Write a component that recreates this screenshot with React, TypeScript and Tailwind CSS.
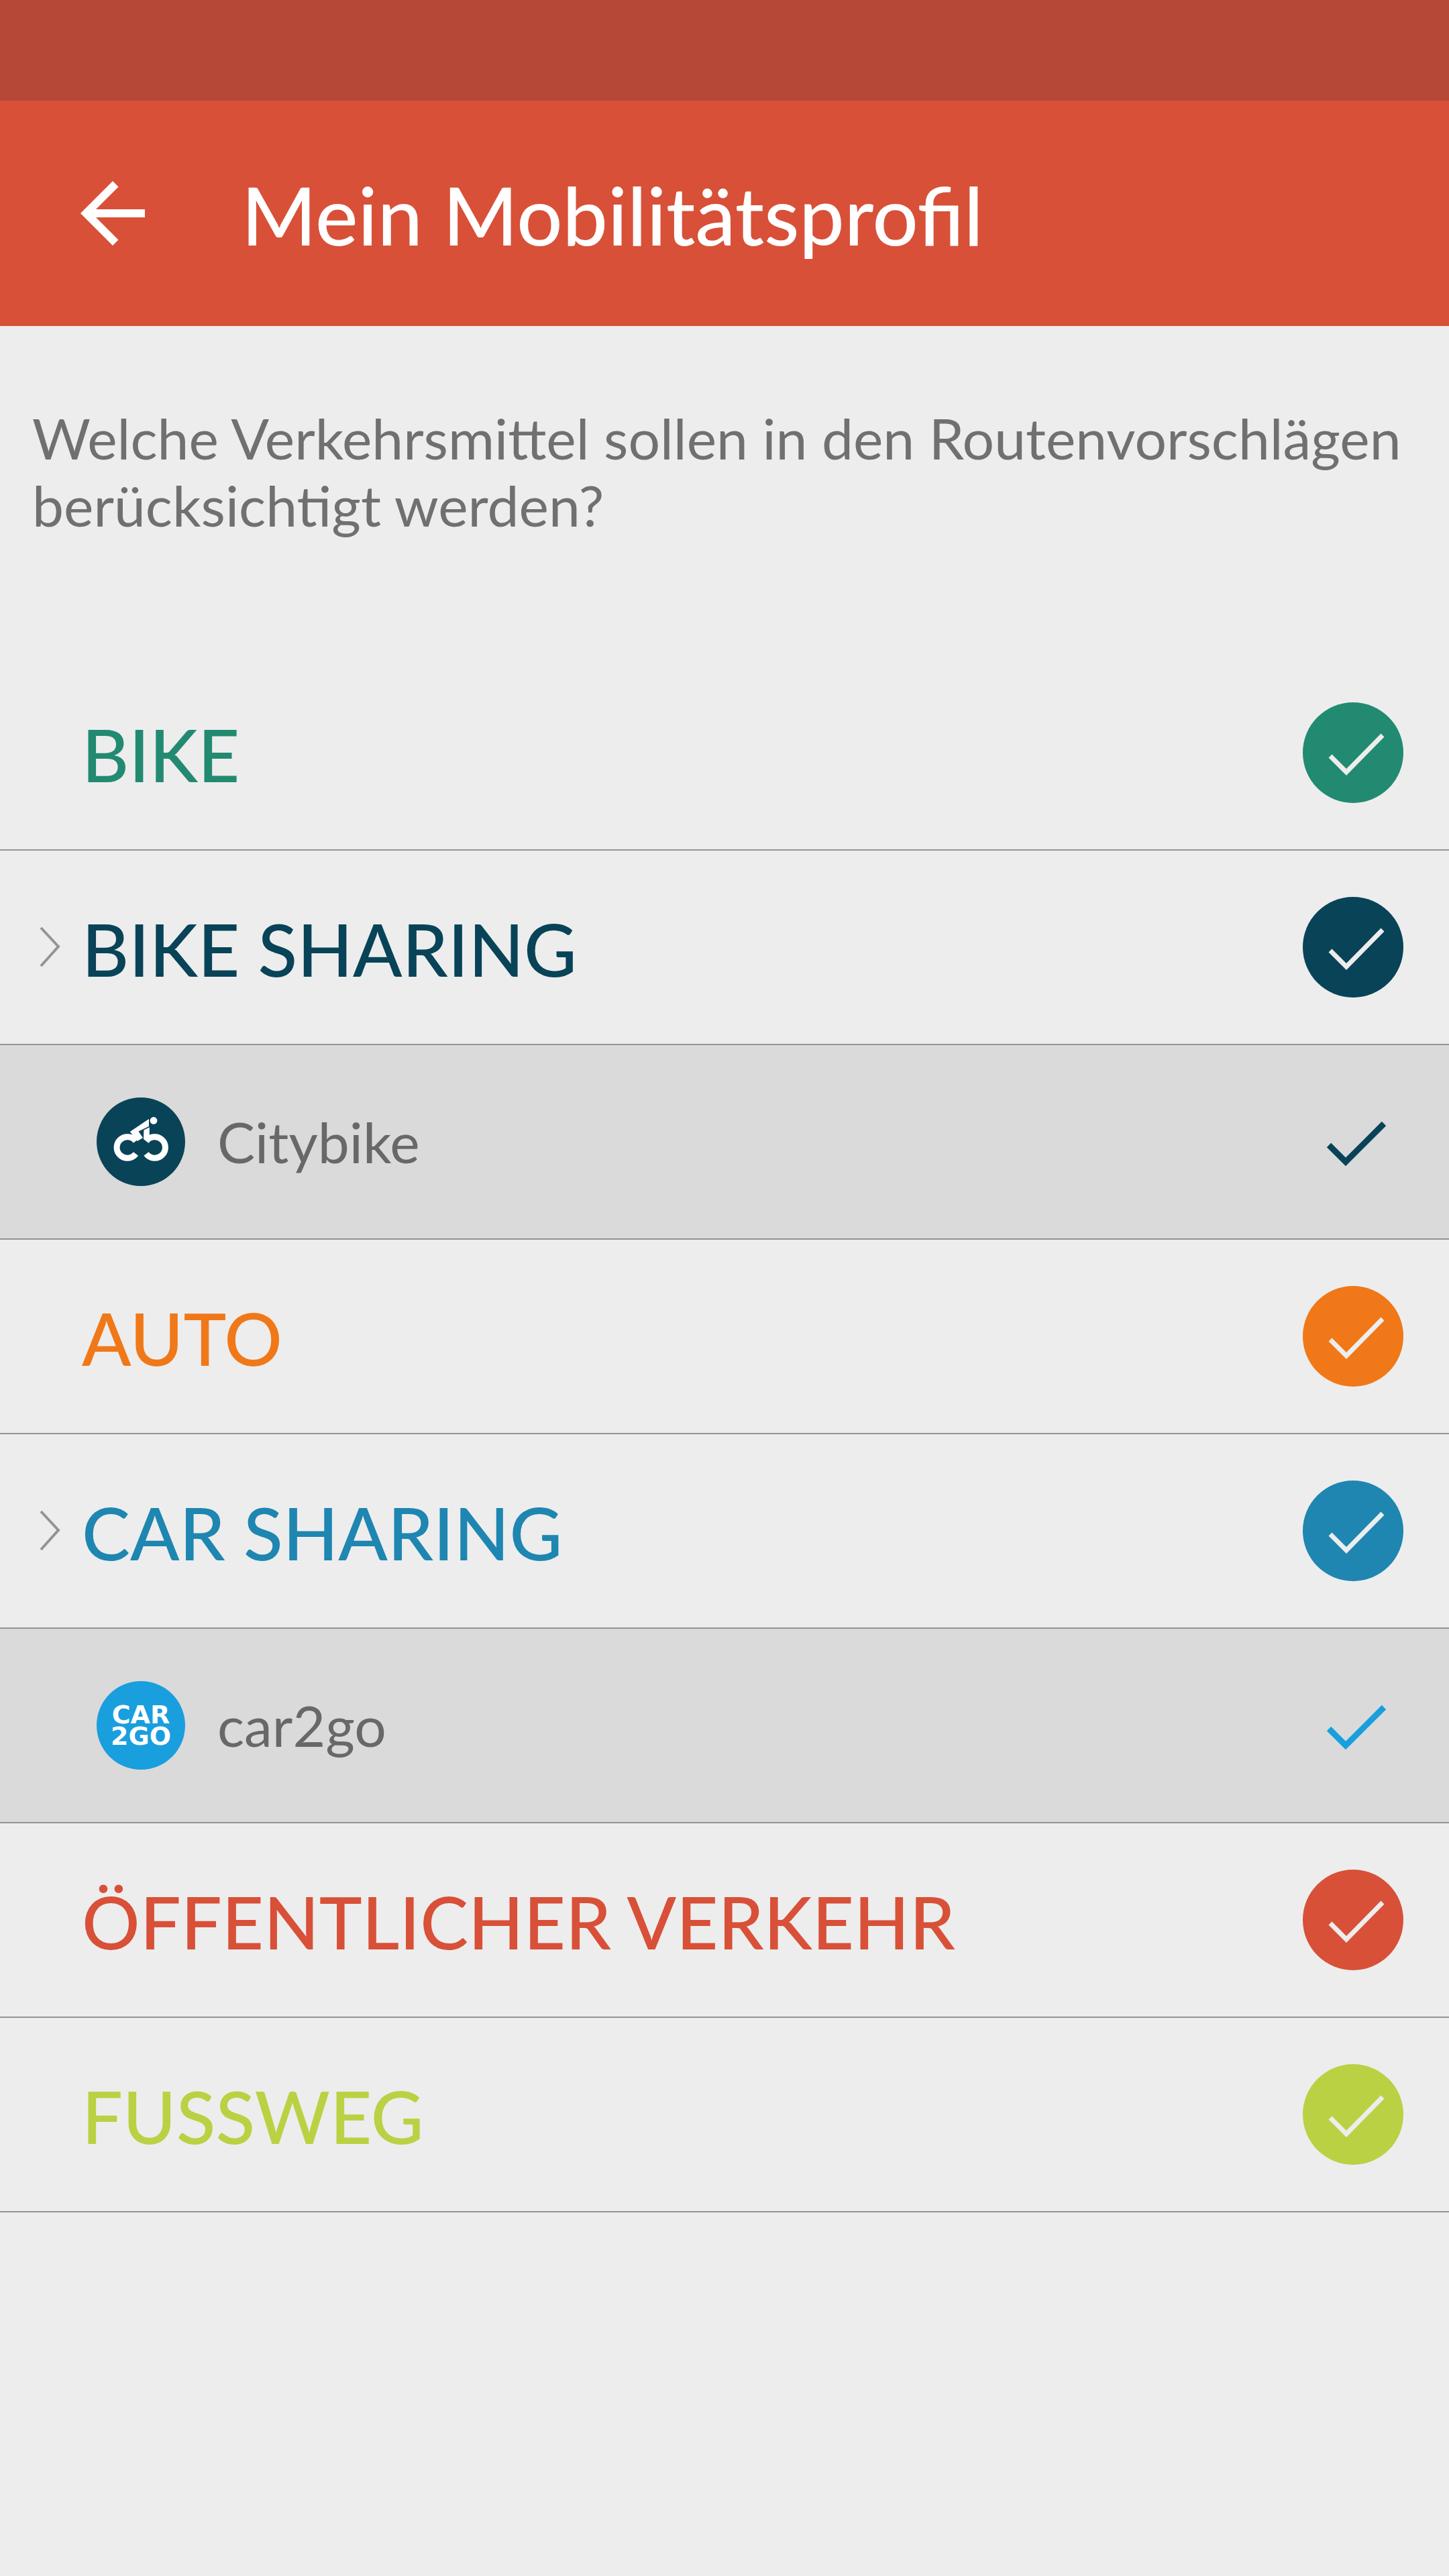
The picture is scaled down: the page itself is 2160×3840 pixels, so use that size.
import { useState } from "react";

type Row = {
  id: string;
  label: string;
  text: string;
  fill: string;
  expandable?: boolean;
  logo?: "citybike" | "car2go";
};

const rows: Row[] = [
  { id: "bike", label: "BIKE", text: "text-[#228a70]", fill: "bg-[#228a70]" },
  { id: "bikeSharing", label: "BIKE SHARING", text: "text-[#084358]", fill: "bg-[#084358]", expandable: true },
  { id: "citybike", label: "Citybike", text: "text-[#084358]", fill: "bg-[#084358]", logo: "citybike" },
  { id: "auto", label: "AUTO", text: "text-[#f07818]", fill: "bg-[#f07818]" },
  { id: "carSharing", label: "CAR SHARING", text: "text-[#1e86b0]", fill: "bg-[#1e86b0]", expandable: true },
  { id: "car2go", label: "car2go", text: "text-[#199fdd]", fill: "bg-[#199fdd]", logo: "car2go" },
  { id: "transit", label: "ÖFFENTLICHER VERKEHR", text: "text-[#d85038]", fill: "bg-[#d85038]" },
  { id: "walk", label: "FUSSWEG", text: "text-[#bad143]", fill: "bg-[#bad143]" },
];

function CitybikeLogo() {
  return (
    <svg viewBox="0 0 132 132" className="size-[132px]" aria-hidden="true">
      <circle cx="66" cy="66" r="66" fill="#084358" />
      <g fill="none" stroke="#fff" strokeWidth="9">
        <path d="M58.5 65A15.8 15.8 0 1 0 58.5 84" />
        <path d="M74 65A15.8 15.8 0 1 1 74 84" />
      </g>
      <circle cx="85" cy="34.5" r="5.4" fill="#fff" />
      <path d="M78 32V43L62.5 50.5L69 60L61 65L49.8 51Z" fill="#fff" />
      <path d="M70.4 48.5L78.8 44.5V57L77.7 68L70 62Z" fill="#fff" />
    </svg>
  );
}

function Car2goLogo() {
  return (
    <span
      className="flex size-[132px] flex-col items-center justify-center rounded-full bg-[#199fdd] font-['DejaVu_Sans'] text-[38px] leading-8 font-bold text-white"
      aria-hidden="true"
    >
      <span>CAR</span>
      <span>2GO</span>
    </span>
  );
}

function ProfileRow({ row, checked, onToggle }: { row: Row; checked: boolean; onToggle: () => void }) {
  const isSub = row.logo !== undefined;

  return (
    <li className={`flex h-[290px] items-center border-b-2 border-[#949494] pr-[68px] ${isSub ? "bg-[#dadada]" : ""}`}>
      {isSub ? (
        <span className="ml-36 mr-12 shrink-0">{row.logo === "citybike" ? <CitybikeLogo /> : <Car2goLogo />}</span>
      ) : (
        <span className="flex w-[122px] shrink-0 justify-end pr-8">
          {row.expandable && (
            <button type="button" aria-label={`${row.label} aufklappen`}>
              <svg viewBox="0 0 32 64" className="h-16 w-8" fill="none" stroke="#949494" strokeWidth="4">
                <path d="M3 3L29 31L3 60" />
              </svg>
            </button>
          )}
        </span>
      )}
      <label
        htmlFor={row.id}
        className={`flex-1 ${isSub ? "text-[84px] leading-[100px] text-[#686868]" : `pt-1 text-[108px] leading-[128px] font-medium ${row.text}`}`}
      >
        {row.label}
      </label>
      <span className="relative size-[150px] shrink-0">
        <input
          type="checkbox"
          id={row.id}
          checked={checked}
          onChange={onToggle}
          className={`block size-full appearance-none rounded-full ${isSub ? "" : row.fill}`}
        />
        {checked && (
          <svg
            viewBox="0 0 150 150"
            className={`pointer-events-none absolute inset-0 ${isSub ? row.text : "text-[#ededed]"}`}
            fill="none"
            stroke="currentColor"
            strokeWidth={isSub ? 9 : 7}
          >
            <path d={isSub ? "M39 80L64 105L121 48" : "M41 80L65 104L119 49"} />
          </svg>
        )}
      </span>
    </li>
  );
}

export default function App() {
  const [selected, setSelected] = useState<string[]>(rows.map((row) => row.id));

  const toggle = (id: string) => {
    setSelected((prev) => (prev.includes(id) ? prev.filter((item) => item !== id) : [...prev, id]));
  };

  return (
    <div className="min-h-screen bg-[#ededed] font-[Lato,sans-serif]">
      <div className="h-[150px] bg-[#b54836]" />
      <header className="flex h-[336px] items-center bg-[#d85038] pl-24 text-white">
        <button type="button" aria-label="Zurück" className="mr-[120px]">
          <svg viewBox="0 0 24 24" className="size-36" fill="currentColor">
            <path d="M20 11H7.83l5.59-5.59L12 4l-8 8 8 8 1.41-1.41L7.83 13H20v-2z" />
          </svg>
        </button>
        <h1 className="pt-1 text-[120px] leading-[144px] font-medium">Mein Mobilitätsprofil</h1>
      </header>
      <main>
        <p className="px-12 pt-[117px] pb-[175px] text-[84px] leading-[100px] text-[#707070]">
          Welche Verkehrsmittel sollen in den Routenvorschlägen berücksichtigt werden?
        </p>
        <ul>
          {rows.map((row) => (
            <ProfileRow key={row.id} row={row} checked={selected.includes(row.id)} onToggle={() => toggle(row.id)} />
          ))}
        </ul>
      </main>
    </div>
  );
}
